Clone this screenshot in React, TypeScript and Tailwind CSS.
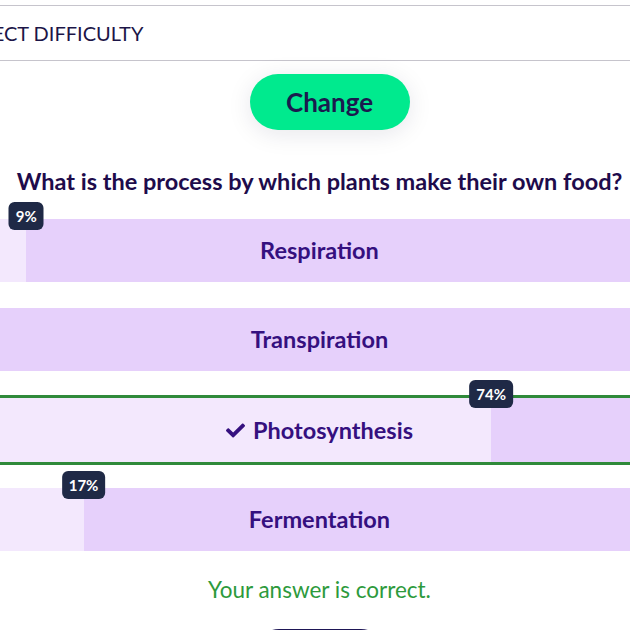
import { FaCheck } from "react-icons/fa";

type Answer = {
  label: string;
  pct: number;
  correct?: boolean;
  showBadge?: boolean;
  gap: string;
};

const answers: Answer[] = [
  { label: "Respiration", pct: 9, showBadge: true, gap: "mt-0" },
  { label: "Transpiration", pct: 0, gap: "mt-[26px]" },
  { label: "Photosynthesis", pct: 74, correct: true, showBadge: true, gap: "mt-[24px]" },
  { label: "Fermentation", pct: 17, showBadge: true, gap: "mt-[23px]" },
];

function AnswerRow({ a }: { a: Answer }) {
  return (
    <div
      className={`relative ${a.gap} ${
        a.correct ? "h-[70px] border-y-[3px] border-[#2f8a3a]" : "h-[63px]"
      }`}
    >
      <div className="absolute inset-0 flex bg-[#e6d0fb]">
        <div className="h-full bg-[#f3e8fd]" style={{ width: `${a.pct}%` }} />
      </div>
      <div className="relative flex h-full items-center justify-center gap-2 text-[23.5px] font-bold text-[#35107f]">
        {a.correct && <FaCheck className="h-[19px] w-[19px]" />}
        {a.label}
      </div>
      {a.showBadge && (
        <span
          className={`absolute ${
            a.correct ? "-top-[18px]" : "-top-[17px]"
          } -translate-x-1/2 rounded-md bg-[#1f2946] px-[7px] py-[4px] text-[15px] font-bold leading-5 text-white`}
          style={{ left: `${a.pct}%` }}
        >
          {a.pct}%
        </span>
      )}
    </div>
  );
}

export default function App() {
  return (
    <div
      className="h-[630px] w-[630px] overflow-hidden bg-white"
      style={{ fontFamily: "Lato, 'Noto Sans', sans-serif" }}
    >
      <div className="pt-[5px]">
        <div className="flex h-[56px] items-center border-y border-[#c6c4cc]">
          <span className="-ml-[40px] text-[20px] text-[#1c1547]">SELECT DIFFICULTY</span>
        </div>
      </div>

      <div className="-ml-[38px] w-[715px]">
        <div className="mt-[13px] flex justify-center pl-[20px]">
          <button className="h-[56px] w-[160px] rounded-full bg-[#00ea8e] text-[26px] font-bold text-[#1b1a4e] shadow-[0_4px_24px_rgba(20,20,60,0.10)]">
            Change
          </button>
        </div>

        <h2 className="mt-[34px] text-center text-[23.5px] font-bold text-[#1e0b4b]">
          What is the process by which plants make their own food?
        </h2>

        <div className="mt-[20px] flex flex-col">
          {answers.map((a) => (
            <AnswerRow key={a.label} a={a} />
          ))}
        </div>

        <p className="mt-[22px] text-center text-[22.5px] text-[#2d9a3c]">
          Your answer is correct.
        </p>

        <div className="mt-[22px] flex justify-center">
          <button className="h-[48px] w-[130px] rounded-full bg-[#1e1656]" />
        </div>
      </div>
    </div>
  );
}
